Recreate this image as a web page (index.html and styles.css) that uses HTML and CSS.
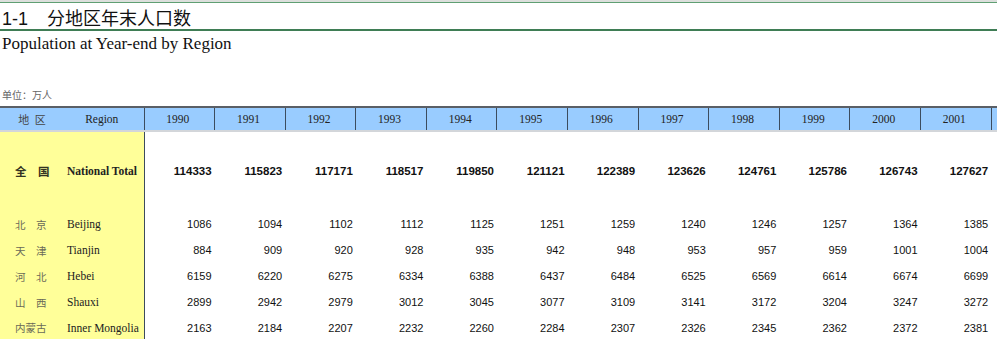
FILE: index.html
```html
<html>
	<head>
<link rel="stylesheet" href="styles.css">
	</head>
	<body>
		<div class="topbar"></div>

		<h1 class="title"><span class="title-num">1-1</span>分地区年末人口数</h1>
		<p class="subtitle">Population at Year-end by Region</p>
		<p class="unit">单位：万人</p>

		<table class="data">
			<colgroup>
				<col class="c-cn"><col class="c-en">
				<col class="c-year"><col class="c-year"><col class="c-year"><col class="c-year">
				<col class="c-year"><col class="c-year"><col class="c-year"><col class="c-year">
				<col class="c-year"><col class="c-year"><col class="c-year"><col class="c-year">
				<col class="c-year">
			</colgroup>
			<tr class="head">
				<th class="cn">地 区</th><th class="en">Region</th>
				<th>1990</th><th>1991</th><th>1992</th><th>1993</th><th>1994</th><th>1995</th>
				<th>1996</th><th>1997</th><th>1998</th><th>1999</th><th>2000</th><th>2001</th><th></th>
			</tr>
			<tr class="gap-top"><td class="cn"></td><td class="en"></td><td colspan="13"></td></tr>
			<tr class="total">
				<td class="cn">全　国</td><td class="en">National Total</td>
				<td>114333</td><td>115823</td><td>117171</td><td>118517</td><td>119850</td><td>121121</td>
				<td>122389</td><td>123626</td><td>124761</td><td>125786</td><td>126743</td><td>127627</td><td></td>
			</tr>
			<tr class="gap-bottom"><td class="cn"></td><td class="en"></td><td colspan="13"></td></tr>
			<tr>
				<td class="cn">北　京</td><td class="en">Beijing</td>
				<td>1086</td><td>1094</td><td>1102</td><td>1112</td><td>1125</td><td>1251</td>
				<td>1259</td><td>1240</td><td>1246</td><td>1257</td><td>1364</td><td>1385</td><td></td>
			</tr>
			<tr>
				<td class="cn">天　津</td><td class="en">Tianjin</td>
				<td>884</td><td>909</td><td>920</td><td>928</td><td>935</td><td>942</td>
				<td>948</td><td>953</td><td>957</td><td>959</td><td>1001</td><td>1004</td><td></td>
			</tr>
			<tr>
				<td class="cn">河　北</td><td class="en">Hebei</td>
				<td>6159</td><td>6220</td><td>6275</td><td>6334</td><td>6388</td><td>6437</td>
				<td>6484</td><td>6525</td><td>6569</td><td>6614</td><td>6674</td><td>6699</td><td></td>
			</tr>
			<tr>
				<td class="cn">山　西</td><td class="en">Shauxi</td>
				<td>2899</td><td>2942</td><td>2979</td><td>3012</td><td>3045</td><td>3077</td>
				<td>3109</td><td>3141</td><td>3172</td><td>3204</td><td>3247</td><td>3272</td><td></td>
			</tr>
			<tr class="last">
				<td class="cn">内蒙古</td><td class="en">Inner Mongolia</td>
				<td>2163</td><td>2184</td><td>2207</td><td>2232</td><td>2260</td><td>2284</td>
				<td>2307</td><td>2326</td><td>2345</td><td>2362</td><td>2372</td><td>2381</td><td></td>
			</tr>
		</table>
	</body>
</html>
```

FILE: styles.css
```css
body {
    margin: 0;
    overflow: hidden;
    background: #ffffff;
    font-family: "Liberation Serif", "Noto Sans CJK SC", serif;
}

.topbar {
    height: 2px;
    background: #dcdfdc;
    border-bottom: 1px solid #5f9f73;
}

.title {
    margin: 0;
    height: 26px;
    padding-left: 2px;
    font-family: "Noto Sans CJK SC", sans-serif;
    font-size: 18px;
    font-weight: normal;
    line-height: 28px;
    color: #111111;
    border-bottom: 2px solid #3f7d55;
}

.title-num {
    display: inline-block;
    width: 45px;
    font-family: "Liberation Sans", sans-serif;
}

.subtitle {
    margin: 0;
    padding: 3px 0 0 2px;
    font-size: 17px;
    line-height: 20px;
    color: #111111;
}

.unit {
    margin: 0;
    padding: 33px 0 0 2px;
    height: 16px;
    font-family: "Noto Sans CJK SC", sans-serif;
    font-size: 10px;
    line-height: 16px;
    color: #666666;
}

table.data {
    margin-top: 3px;
    border-collapse: collapse;
    table-layout: fixed;
    width: 1061px;
}

.c-cn { width: 60px; }
.c-en { width: 84px; }
.c-year { width: 70.6px; }

th, td {
    padding: 0 3px 0 0;
    white-space: nowrap;
    overflow: hidden;
}

tr.head th {
    height: 24px;
    background: #99ccff;
    border-top: 2px solid #5a5f66;
    border-left: 1px solid #3c4c5e;
    border-bottom: 2px solid #d3d6da;
    font-size: 11.5px;
    font-weight: normal;
    text-align: center;
    color: #222222;
}

tr.head th.cn {
    border-left: none;
    font-family: "Noto Sans CJK SC", sans-serif;
    font-size: 11px;
    word-spacing: 3px;
    color: #444444;
    padding: 0 0 0 4px;
}

tr.head th.en {
    border-left: none;
    padding: 0;
}

td {
    height: 26px;
    text-align: right;
    font-family: "Liberation Sans", sans-serif;
    font-size: 11px;
    color: #111111;
}

td.cn, td.en {
    background: #ffff99;
    text-align: left;
}

td.cn {
    padding-left: 15px;
    font-family: "Noto Sans CJK SC", sans-serif;
    font-size: 10.5px;
    color: #6a6a58;
}

td.en {
    padding-left: 7px;
    font-family: "Liberation Serif", serif;
    font-size: 11.5px;
    color: #222222;
    border-right: 1px solid #3c4c5e;
}

tr.gap-top td { height: 27px; }
tr.gap-bottom td { height: 27px; }

tr.total td {
    font-weight: bold;
    font-size: 11.5px;
}

tr.total td.cn {
    color: #333322;
}

tr.last td {
    border-bottom: 1px solid #c8c8c8;
}
```
